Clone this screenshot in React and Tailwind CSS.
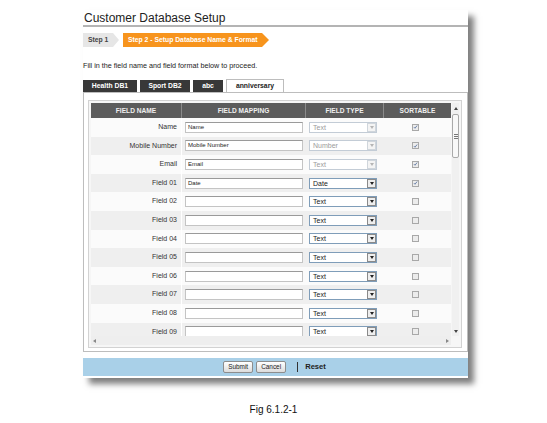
import React from "react";

const rows = [
  { name: "Name", map: "Name", type: "Text", locked: true, sort: true },
  { name: "Mobile Number", map: "Mobile Number", type: "Number", locked: true, sort: true },
  { name: "Email", map: "Email", type: "Text", locked: true, sort: true },
  { name: "Field 01", map: "Date", type: "Date", locked: false, sort: true },
  { name: "Field 02", map: "", type: "Text" },
  { name: "Field 03", map: "", type: "Text" },
  { name: "Field 04", map: "", type: "Text" },
  { name: "Field 05", map: "", type: "Text" },
  { name: "Field 06", map: "", type: "Text" },
  { name: "Field 07", map: "", type: "Text" },
  { name: "Field 08", map: "", type: "Text" },
  { name: "Field 09", map: "", type: "Text" },
];

const tabs = [
  { label: "Health DB1", w: "w-[54px]" },
  { label: "Sport DB2", w: "w-[50px]" },
  { label: "abc", w: "w-[30px]" },
];

export default function App() {
  return (
    <div className="w-[547px] h-[423px] bg-white pt-[10px] font-['Liberation_Sans',Arial,sans-serif] text-[#222]">
      {/* WINDOW */}
      <div className="ml-[83px] w-[385px] h-[368px] bg-white shadow-[6px_6px_6px_rgba(0,0,0,0.5)] flex flex-col">
        {/* TITLE */}
        <div className="pt-px border-b-2 border-[#b4b4b4]">
          <h1 className="text-[12px] leading-[14px] text-[#222] pl-px">Customer Database Setup</h1>
        </div>

        {/* STEPS */}
        <div className="mt-[6px] h-[14px] flex gap-[4px]">
          <div className="w-[36px] h-full bg-[#e6e6e6] flex items-center pl-[5px] text-[6.8px] font-bold text-[#444] [clip-path:polygon(0_0,calc(100%_-_6px)_0,100%_50%,calc(100%_-_6px)_100%,0_100%)]">
            Step 1
          </div>
          <div className="w-[146px] h-full bg-[#f7941d] flex items-center pl-[5px] text-[6.8px] font-bold text-white [clip-path:polygon(0_0,calc(100%_-_7px)_0,100%_50%,calc(100%_-_7px)_100%,0_100%)]">
            Step 2 - Setup Database Name &amp; Format
          </div>
        </div>

        {/* INTRO */}
        <p className="mt-[14px] h-[10px] leading-[10px] text-[7.2px] text-[#222]">
          Fill in the field name and field format below to proceed.
        </p>

        {/* TABS */}
        <div className="mt-[7px] h-[14px] flex items-end gap-[3px]">
          {tabs.map((t) => (
            <div
              key={t.label}
              className={`${t.w} h-[12px] bg-[#383838] text-white text-[6.8px] font-bold flex items-center justify-center`}
            >
              {t.label}
            </div>
          ))}
          <div className="h-[14px] w-[58px] -mb-px bg-white border border-b-0 border-[#bdbdbd] text-[#222] text-[6.8px] font-bold flex items-center justify-center">
            anniversary
          </div>
        </div>

        {/* PANEL */}
        <div className="h-[260px] border border-[#bdbdbd] pt-[7px] pl-[4px]">
          <div className="w-[374px] border border-[#d2d2d2] p-[2px] bg-[#f6f6f6]">
            <div className="flex">
              {/* TABLE */}
              <div className="w-[360px]">
                <div className="grid grid-cols-[91px_124px_78px_67px] h-[15px] bg-[#5c5c5c] text-[#f0f0f0] text-[6.6px] font-bold">
                  <div className="flex items-center justify-center border-r border-[#8a8a8a]">FIELD NAME</div>
                  <div className="flex items-center justify-center border-r border-[#8a8a8a]">FIELD MAPPING</div>
                  <div className="flex items-center justify-center border-r border-[#8a8a8a]">FIELD TYPE</div>
                  <div className="flex items-center justify-center">SORTABLE</div>
                </div>
                <div className="h-[218px] overflow-hidden">
                  {rows.map((r, i) => (
                    <div
                      key={r.name}
                      className={`grid grid-cols-[91px_124px_78px_67px] h-[18.6px] ${
                        i % 2 ? "bg-[#efefef]" : "bg-[#fbfbfb]"
                      }`}
                    >
                      <div className="flex items-center justify-end pr-[4px] text-[7px] text-[#333] border-r border-white">
                        {r.name}
                      </div>
                      <div className="flex items-center pl-[3px]">
                        <div className="w-[118px] h-[11px] bg-white border border-[#c4c4c4] border-t-[#9a9a9a] pl-[2px] flex items-center text-[6px] text-[#222]">
                          {r.map}
                        </div>
                      </div>
                      <div className="flex items-center pl-[3px]">
                        <TypeSelect value={r.type} disabled={r.locked} />
                      </div>
                      <div className="flex items-center justify-center pr-[5px]">
                        <Check checked={r.sort} />
                      </div>
                    </div>
                  ))}
                </div>
              </div>

              {/* VERTICAL SCROLLBAR */}
              <div className="ml-px w-[9px] h-[233px] bg-[#f0f0f0] flex flex-col items-center">
                <div className="h-[10px] flex items-center">
                  <span className="w-0 h-0 border-l-[2px] border-r-[2px] border-b-[3px] border-l-transparent border-r-transparent border-b-[#444]" />
                </div>
                <div className="w-[7px] h-[44px] mt-[1px] bg-[#f8f8f8] border border-[#a9a9a9] rounded-[2px] flex flex-col items-center justify-center gap-px">
                  <span className="w-[4px] h-px bg-[#777]" />
                  <span className="w-[4px] h-px bg-[#777]" />
                  <span className="w-[4px] h-px bg-[#777]" />
                </div>
                <div className="flex-1" />
                <div className="h-[10px] flex items-center">
                  <span className="w-0 h-0 border-l-[2px] border-r-[2px] border-t-[3px] border-l-transparent border-r-transparent border-t-[#444]" />
                </div>
              </div>
            </div>

            {/* HORIZONTAL SCROLLBAR */}
            <div className="h-[9px] w-[360px] bg-[#eeeeee] flex items-center justify-between px-[2px]">
              <span className="w-0 h-0 border-t-[2px] border-b-[2px] border-r-[3px] border-t-transparent border-b-transparent border-r-[#888]" />
              <span className="w-0 h-0 border-t-[2px] border-b-[2px] border-l-[3px] border-t-transparent border-b-transparent border-l-[#888]" />
            </div>
          </div>
        </div>

        {/* FOOTER */}
        <div className="mt-[6px] h-[18px] bg-[#a9d0e8] flex items-center justify-center gap-[3px] pr-[2px]">
          <button className="h-[12px] w-[30px] border border-[#8d8d8d] rounded-[2px] bg-gradient-to-b from-white to-[#dcdcdc] text-[6.4px] text-[#222] leading-none">
            Submit
          </button>
          <button className="h-[12px] w-[30px] border border-[#8d8d8d] rounded-[2px] bg-gradient-to-b from-white to-[#dcdcdc] text-[6.4px] text-[#222] leading-none">
            Cancel
          </button>
          <span className="ml-[8px] w-px h-[10px] bg-[#333]" />
          <span className="ml-[4px] text-[7.6px] font-bold text-[#222]">Reset</span>
        </div>
      </div>

      {/* CAPTION */}
      <p className="mt-[26px] text-center text-[10px] leading-[12px] text-[#111]">Fig 6.1.2-1</p>
    </div>
  );
}

function TypeSelect({ value, disabled }) {
  return (
    <div
      className={`w-[68px] h-[11px] bg-white border flex items-center ${
        disabled ? "border-[#c3ccd6]" : "border-[#7f9db9]"
      }`}
    >
      <span
        className={`flex-1 pl-[3px] text-[7px] leading-none ${
          disabled ? "text-[#9b9b9b]" : "text-[#222]"
        }`}
      >
        {value}
      </span>
      <span
        className={`w-[9px] h-[9px] border flex items-center justify-center ${
          disabled ? "border-[#d0d6dc] bg-[#f4f4f4]" : "border-[#8a8a8a] bg-[#eeeeee]"
        }`}
      >
        <span
          className={`w-0 h-0 border-l-[2.5px] border-r-[2.5px] border-t-[3px] border-l-transparent border-r-transparent ${
            disabled ? "border-t-[#b5b5b5]" : "border-t-[#222]"
          }`}
        />
      </span>
    </div>
  );
}

function Check({ checked }) {
  return (
    <span className="w-[7px] h-[7px] border border-[#a8a8a8] bg-[#ececec] flex items-center justify-center">
      {checked && (
        <svg viewBox="0 0 8 8" className="w-[6px] h-[6px]">
          <path d="M1.5 4.2 L3.2 6 L6.6 1.6" fill="none" stroke="#4f6a9a" strokeWidth="1.3" />
        </svg>
      )}
    </span>
  );
}
